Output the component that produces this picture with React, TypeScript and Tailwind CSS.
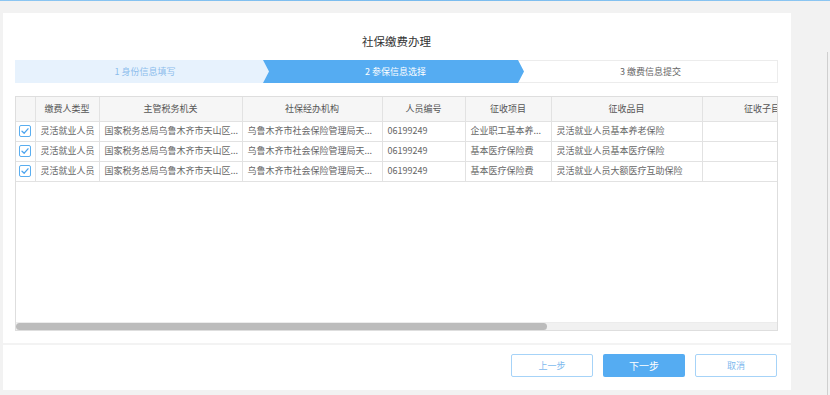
import React from 'react';

const font = { fontFamily: '"Noto Sans CJK SC", "Noto Sans", sans-serif' };

// Columns of the insured-items table; widths follow the screenshot
const columns = [
  { key: 'type', title: '缴费人类型', width: 64 },
  { key: 'tax', title: '主管税务机关', width: 143 },
  { key: 'agency', title: '社保经办机构', width: 140 },
  { key: 'id', title: '人员编号', width: 83 },
  { key: 'item', title: '征收项目', width: 86 },
  { key: 'category', title: '征收品目', width: 151 },
  { key: 'sub', title: '征收子目', width: 120 },
  { key: 'base', title: '缴费基数', width: 130 },
  { key: 'period', title: '费款所属期', width: 147 },
];

const rows = [
  {
    type: '灵活就业人员',
    tax: '国家税务总局乌鲁木齐市天山区...',
    agency: '乌鲁木齐市社会保险管理局天...',
    id: '06199249',
    item: '企业职工基本养...',
    category: '灵活就业人员基本养老保险',
    sub: '',
    base: '',
    period: '',
  },
  {
    type: '灵活就业人员',
    tax: '国家税务总局乌鲁木齐市天山区...',
    agency: '乌鲁木齐市社会保险管理局天...',
    id: '06199249',
    item: '基本医疗保险费',
    category: '灵活就业人员基本医疗保险',
    sub: '',
    base: '',
    period: '',
  },
  {
    type: '灵活就业人员',
    tax: '国家税务总局乌鲁木齐市天山区...',
    agency: '乌鲁木齐市社会保险管理局天...',
    id: '06199249',
    item: '基本医疗保险费',
    category: '灵活就业人员大额医疗互助保险',
    sub: '',
    base: '',
    period: '',
  },
];

function Checkbox() {
  return (
    <span className="mx-auto flex h-[12px] w-[12px] items-center justify-center rounded-[2px] border border-[#5aaef0] bg-white">
      <svg width="8" height="8" viewBox="0 0 8 8" fill="none">
        <path d="M1 4.2 L3.2 6.2 L7 1.8" stroke="#4aa3ee" strokeWidth="1.3" strokeLinecap="round" strokeLinejoin="round" />
      </svg>
    </span>
  );
}

function Steps() {
  return (
    <div className="flex h-[23px] text-[9px]">
      <div className="flex w-[254px] shrink-0 items-center justify-center bg-[#e7f2fd] pl-[6px] text-[#8cbdec]">
        1 身份信息填写
      </div>
      <div className="-ml-[6px] flex w-[261px] shrink-0 items-center justify-center bg-[#55acf2] pl-[4px] text-white [clip-path:polygon(0_0,calc(100%-6px)_0,100%_50%,calc(100%-6px)_100%,0_100%,6px_50%)]">
        2 参保信息选择
      </div>
      <div className="-ml-[6px] flex flex-1 items-center justify-center border border-l-0 border-[#ececec] pl-[6px] text-[#666]">
        3 缴费信息提交
      </div>
    </div>
  );
}

function DataTable() {
  return (
    <div className="flex h-[235px] flex-col border border-[#dedede]">
      <div className="flex-1 overflow-hidden">
        <table className="table-fixed border-collapse text-[9px]" style={{ width: 19 + columns.reduce((s, c) => s + c.width, 0) }}>
          <colgroup>
            <col style={{ width: 19 }} />
            {columns.map((c) => (
              <col key={c.key} style={{ width: c.width }} />
            ))}
          </colgroup>
          <thead>
            <tr className="h-[24px] bg-[#f6f6f6] text-[#555]">
              <th className="border-b border-r border-[#e2e2e2] font-normal" />
              {columns.map((c) => (
                <th key={c.key} className="whitespace-nowrap border-b border-r border-[#e2e2e2] text-center font-normal">
                  {c.title}
                </th>
              ))}
            </tr>
          </thead>
          <tbody>
            {rows.map((r, i) => (
              <tr key={i} className="h-[20px] text-[#666]">
                <td className="border-b border-r border-[#e2e2e2]">
                  <Checkbox />
                </td>
                {columns.map((c) => (
                  <td key={c.key} className="overflow-hidden whitespace-nowrap border-b border-r border-[#e2e2e2] px-[5px]">
                    {r[c.key as keyof typeof r]}
                  </td>
                ))}
              </tr>
            ))}
          </tbody>
        </table>
      </div>
      {/* horizontal scrollbar */}
      <div className="h-[8px] border-t border-[#ececec] bg-[#f1f1f1]">
        <div className="h-full w-[531px] rounded-full bg-[#bcbcbc]" />
      </div>
    </div>
  );
}

export default function App() {
  return (
    <div className="relative h-[395px] w-[830px] overflow-hidden bg-[#f2f2f2]" style={font}>
      <div className="h-[1px] bg-gradient-to-r from-[#8cc6f2] via-[#79bbee] to-[#8cc6f2]" />
      <div className="flex">
        {/* dialog panel */}
        <div className="ml-[3px] mt-[12px] flex h-[377px] w-[788px] flex-col bg-white">
          <div className="px-[12px] pr-[13px]">
            <div className="mt-[18px] h-[20px] text-center text-[11.5px] leading-[20px] text-[#333]">社保缴费办理</div>
            <div className="mt-[9px]">
              <Steps />
            </div>
            <div className="mt-[13px]">
              <DataTable />
            </div>
          </div>
          <div className="mt-[12px] flex flex-1 justify-end gap-[10px] border-t-2 border-[#f3f3f3] pr-[13px] pt-[9px]">
            <button className="h-[23px] w-[82px] rounded-[2px] border border-[#a6d3f8] bg-white text-[9px] text-[#7db9ee]">上一步</button>
            <button className="h-[23px] w-[82px] rounded-[2px] bg-[#55acf2] text-[10px] text-white">下一步</button>
            <button className="mr-[1px] h-[23px] w-[82px] rounded-[2px] border border-[#a6d3f8] bg-white text-[9px] text-[#7db9ee]">取消</button>
          </div>
        </div>
        {/* page scrollbar strip */}
        <div className="ml-[36px] mt-[51px] h-[343px] w-[1px] bg-[#cfcfcf]" />
      </div>
    </div>
  );
}
